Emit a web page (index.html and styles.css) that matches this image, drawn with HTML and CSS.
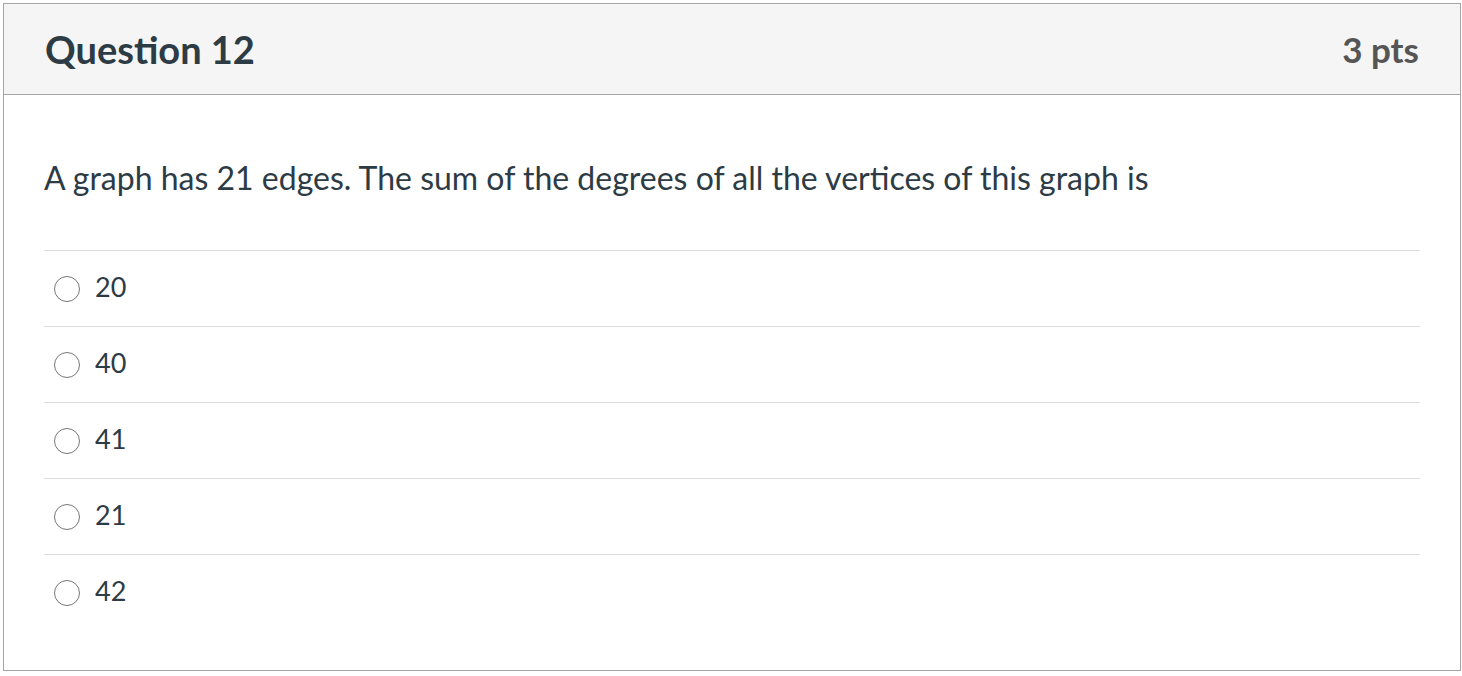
FILE: index.html
```html
<!DOCTYPE html>
<html>
<head>
<meta charset="utf-8">
<link rel="stylesheet" href="styles.css">
</head>
<body>
<div class="question">
  <div class="header">
    <h2 class="title">Question 12</h2>
    <div class="points">3 pts</div>
  </div>
  <div class="content">
    <p class="text">A graph has 21 edges. The sum of the degrees of all the vertices of this graph is</p>
    <div class="answers">
      <label class="answer"><span class="radio"></span><span class="label">20</span></label>
      <label class="answer"><span class="radio"></span><span class="label">40</span></label>
      <label class="answer"><span class="radio"></span><span class="label">41</span></label>
      <label class="answer"><span class="radio"></span><span class="label">21</span></label>
      <label class="answer"><span class="radio"></span><span class="label">42</span></label>
    </div>
  </div>
</div>
</body>
</html>
```
FILE: styles.css
```css
html, body {
  margin: 0;
  padding: 0;
  background: #fff;
}
body {
  padding: 3px 0 0 3px;
  font-family: Lato, "Liberation Sans", sans-serif;
  color: #2d3b45;
}
.question {
  width: 1458px;
  height: 668px;
  box-sizing: border-box;
  border: 1px solid #a5a5a5;
}
.header {
  height: 90px;
  background: #f5f5f5;
  border-bottom: 1px solid #a5a5a5;
  display: flex;
  align-items: center;
  justify-content: space-between;
  padding: 0 41px 0 41px;
}
.title {
  margin: 0;
  font-size: 38px;
  font-weight: 700;
  color: #2d3b45;
}
.points {
  font-size: 35px;
  font-weight: 700;
  color: #555;
}
.content {
  padding: 0 40px 0 40px;
}
.text {
  margin: 0;
  padding-top: 59px;
  padding-bottom: 48px;
  font-size: 32px;
  line-height: 48px;
}
.answers {
  display: flex;
  flex-direction: column;
}
.answer {
  display: flex;
  align-items: center;
  height: 75px;
  border-top: 1px solid #ddd;
}
.radio {
  width: 24px;
  height: 24px;
  border: 1.3px solid #777;
  border-radius: 50%;
  margin-left: 10px;
  margin-right: 15px;
  box-sizing: content-box;
  background: #fff;
}
.label {
  font-size: 27px;
  line-height: 1;
  margin-bottom: 4px;
}
```
